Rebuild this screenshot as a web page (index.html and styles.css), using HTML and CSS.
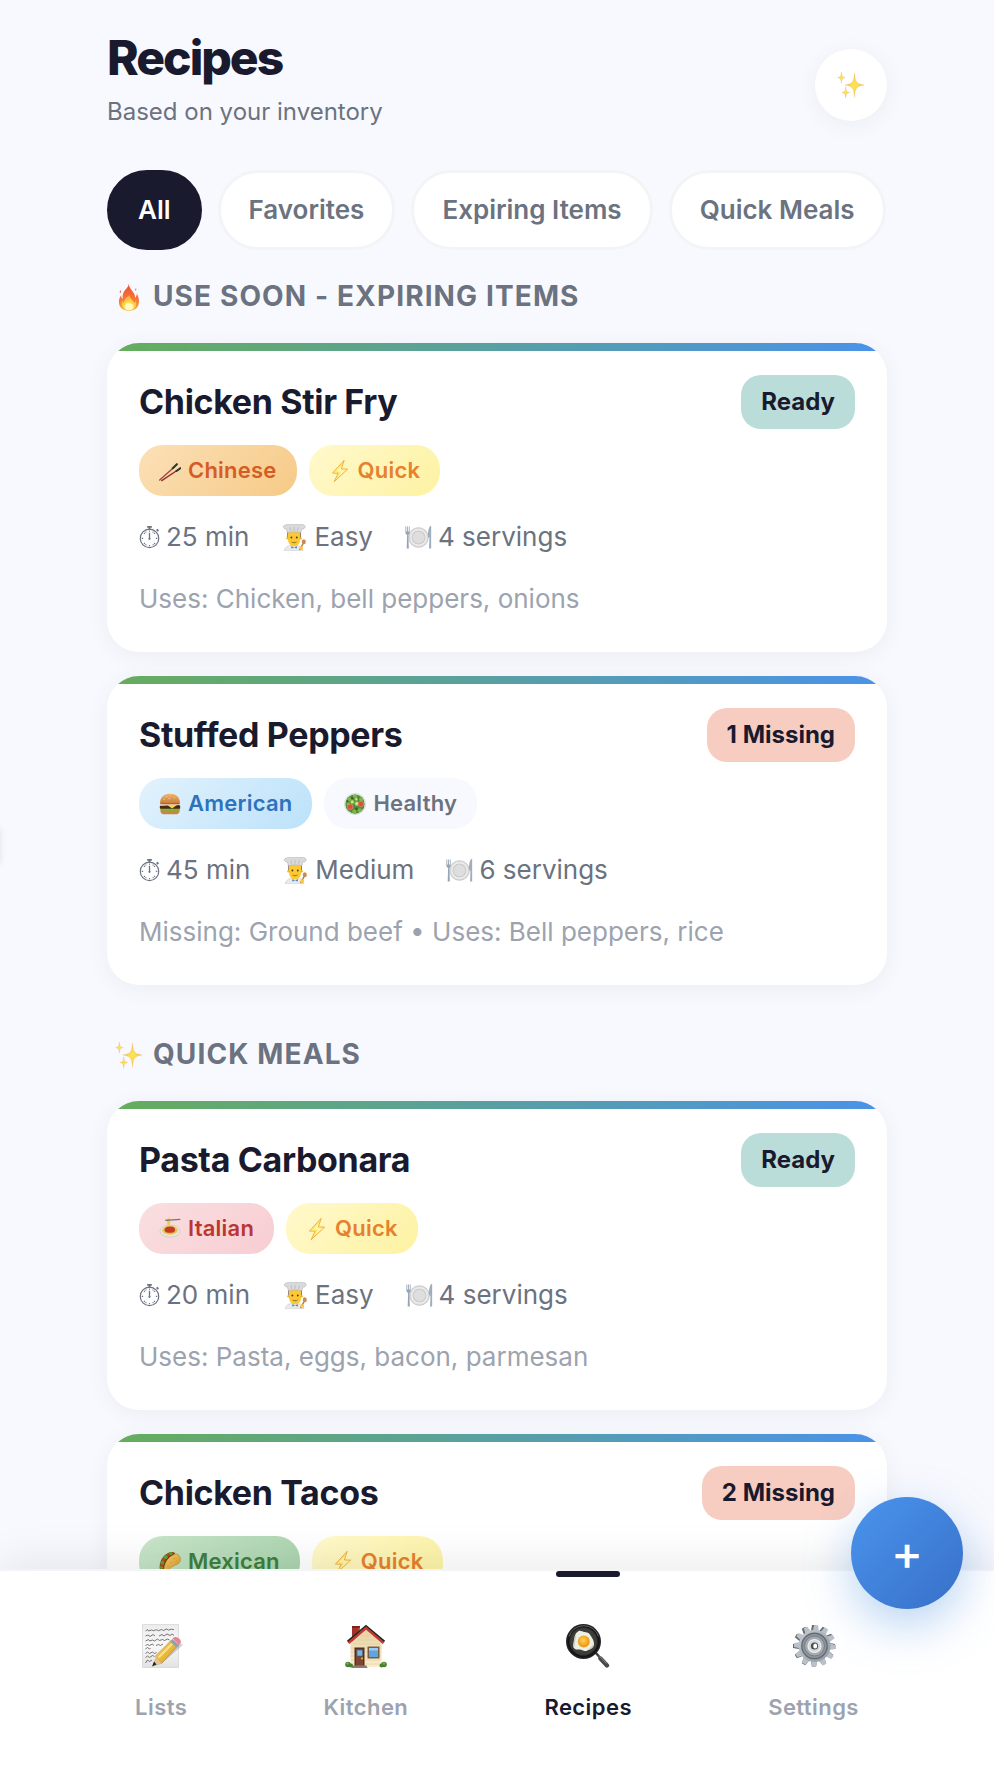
FILE: index.html
```html
<!DOCTYPE html>
<html lang="en">
<head>
<meta charset="utf-8">
<meta name="viewport" content="width=device-width, initial-scale=1">
<title>Recipes</title>
<link rel="stylesheet" href="styles.css">
</head>
<body>
<svg class="sprite" aria-hidden="true">
  <defs>
    <radialGradient id="g-star"><stop offset="0" stop-color="#fbe84a"/><stop offset=".45" stop-color="#fbd75a"/><stop offset="1" stop-color="#f0a848"/></radialGradient>
    <linearGradient id="g-fire" x1="0" y1="0" x2="0" y2="1"><stop offset="0" stop-color="#ee4a35"/><stop offset=".6" stop-color="#f67a38"/><stop offset="1" stop-color="#fbb03b"/></linearGradient>
    <radialGradient id="g-flame" cx=".5" cy=".85" r=".8"><stop offset="0" stop-color="#fffbb0"/><stop offset=".5" stop-color="#fdd94a"/><stop offset="1" stop-color="#f99b3c"/></radialGradient>
    <linearGradient id="g-bun" x1="0" y1="0" x2="0" y2="1"><stop offset="0" stop-color="#f0b26a"/><stop offset="1" stop-color="#c97f3a"/></linearGradient>
    <linearGradient id="g-paper" x1="0" y1="0" x2="0" y2="1"><stop offset="0" stop-color="#ececec"/><stop offset=".5" stop-color="#f8f8f8"/><stop offset="1" stop-color="#e2e2e2"/></linearGradient>
    <linearGradient id="g-pencil" x1="0" y1="0" x2="1" y2="1"><stop offset="0" stop-color="#fbdc62"/><stop offset="1" stop-color="#d9971c"/></linearGradient>
    <linearGradient id="g-wall" x1="0" y1="0" x2="0" y2="1"><stop offset="0" stop-color="#e6d3a4"/><stop offset="1" stop-color="#faedcc"/></linearGradient>
    <linearGradient id="g-gear" x1="0" y1="0" x2="1" y2="1"><stop offset="0" stop-color="#c6cdd4"/><stop offset="1" stop-color="#8f979f"/></linearGradient>
    <radialGradient id="g-pan"><stop offset="0" stop-color="#4a4a4a"/><stop offset=".75" stop-color="#3a3a3a"/><stop offset=".85" stop-color="#111"/><stop offset="1" stop-color="#2b2b2b"/></radialGradient>
    <radialGradient id="g-yolk" cx=".45" cy=".4"><stop offset="0" stop-color="#ffd34d"/><stop offset="1" stop-color="#ee9a1f"/></radialGradient>
    <radialGradient id="g-plate"><stop offset="0" stop-color="#dcdcdc"/><stop offset=".6" stop-color="#e4e4e4"/><stop offset=".66" stop-color="#c4c4c4"/><stop offset=".74" stop-color="#f0f0f0"/><stop offset="1" stop-color="#d4d4d4"/></radialGradient>
    <linearGradient id="g-taco" x1="0" y1="0" x2="1" y2="1"><stop offset="0" stop-color="#f7d468"/><stop offset="1" stop-color="#d69628"/></linearGradient>
  </defs>

  <symbol id="sparkles" viewBox="0 0 32 32">
    <g fill="url(#g-star)" stroke="#f3b765" stroke-width=".3">
      <path d="M20 2c.8 10 2 12.800 11 14-9 1.200-10.200 4-11 14-.8-10-2-12.800-11-14C18 14.800 19.200 12 20 2z"/>
      <path d="M5 1c.5 4.500 1.200 6 4.500 6.500C6.200 8 5.500 9.500 5 14 4.500 9.500 3.800 8 .5 7.500 3.800 7 4.500 5.500 5 1z"/>
      <path d="M10 18c.5 4.500 1.200 6 4.500 6.500-3.300.5-4 2-4.500 6.500-.5-4.500-1.200-6-4.500-6.500 3.300-.5 4-2 4.500-6.500z"/>
    </g>
  </symbol>

  <symbol id="fire" viewBox="2 0 24 32">
    <path fill="url(#g-fire)" d="M14 .5c-.8 5 4.500 8 6.300 12.500.6 1.500.7 2.500.5 4 1.500-1 2.200-3.200 2.100-5 2.100 4 3.100 7.500 2.300 11.500C24.300 29 19.500 31.800 14 31.800S3.300 29 2.600 23.500c-.8-4 .6-7 2.400-9.600 0 2 .6 3.300 1.700 4.300C6.300 13 7.800 10 10 7.500 11.600 5.600 13.400 4 14 .5z"/>
    <path fill="url(#g-flame)" d="M14.500 13c0 4 4.200 6 5.500 10 .9-1 1.200-2 1.200-3.200 1.500 3.700 1.300 6.500-.7 8.700-3.400 3.500-9.600 3.500-13 0-2.200-2.300-2.400-5.600-1-9 .3 1.400.8 2.500 1.800 3.300C8.300 19 9.700 17.500 11.500 16c1.500-1.200 2.500-1.500 3-3z"/>
    <ellipse cx="14" cy="27" rx="4.500" ry="4" fill="#fffcc0"/>
    <path fill="#f0583a" d="M4.500 8c-1 1.500-1.500 2.500-.8 3.800C4.800 11 5.100 9.700 4.500 8zM21 8c0-.8.300-1.500 1-2 .6 1 .5 1.900-.2 2.800z"/>
  </symbol>

  <symbol id="chopsticks" viewBox="0 0 32 32">
    <g stroke-linecap="round"><path stroke="#a8433b" stroke-width="2" d="M1 29 26 7"/><path stroke="#8d3230" stroke-width="2" d="M4 30 31 12"/><path stroke="#2c3a35" stroke-width="3" d="m20 12 6-6M25.500 16l5.500-4"/></g>
  </symbol>

  <symbol id="bolt" viewBox="0 0 32 32">
    <path fill="#fff6a8" stroke="#efa52f" stroke-width="1.300" stroke-linejoin="round" d="M22 .5 5 19l8.300.2L7.500 31.500 27 13.300l-9-.3z"/>
    <path fill="none" stroke="#f8de4c" stroke-width="1.200" d="M19.500 5.500 8 17.600l7.800.2-4.600 9"/>
  </symbol>

  <symbol id="stopwatch" viewBox="0 0 22 26">
    <g fill="none" stroke="currentColor"><circle cx="11" cy="14.500" r="10" stroke-width="1.300"/><path stroke-width="2" d="M8.500 2h5M11 2v3M18.800 4.700l1.800 1.800"/><path stroke-width="1.400" d="M11 8.500v6.500"/><path stroke-width="1.200" d="M11 6v1.300M11 21.700v1.400M2.600 14.500h1.500M17.900 14.500h1.500M5 8.500l1 1M17 20.500l-1-1M5 20.500l1-1M17 8.500l-1 1M6.800 7.200l.6 1M15.200 7.200l-.6 1M6.800 21.800l.6-1M15.200 21.800l-.6-1"/></g>
    <circle cx="11" cy="15" r="1.200" fill="currentColor"/>
  </symbol>

  <symbol id="chef" viewBox="0 0 32 32">
    <path fill="#e9eaec" stroke="#c3c6ca" stroke-width=".6" d="M4 32c0-4 3-6 7-6.500h8c4 .5 7 2.500 7 6.500z"/>
    <path fill="#6d5136" d="M7.500 8h16v8h-16z"/>
    <path fill="#fcc935" d="M8.300 9.500h14.400V18c0 5-3 8.500-7.200 8.500S8.300 23 8.300 18z"/>
    <circle cx="7.800" cy="17" r="1.500" fill="#f0b429"/><circle cx="23.200" cy="17" r="1.500" fill="#f0b429"/>
    <path fill="#d9dadc" stroke="#a9a9a9" stroke-width=".6" d="M7.500 10.500 6.500 6C2 6 1.500 1.500 5.500 1.200 8-.2 11.500.200 13.500.800c3-1 6-1 8 0 3.500-1 7.500.2 7 2.700C28.300 5.200 27 6 24.500 6l-1 4.500c-5-1.500-11-1.500-16 0z"/>
    <path fill="none" stroke="#aaa" stroke-width=".7" d="m10.500 4 1 4M15.500 3.500V8M20.500 4l-1 4"/>
    <circle cx="12.300" cy="16" r="1.100" fill="#553715"/><circle cx="18.700" cy="16" r="1.100" fill="#553715"/>
    <path fill="none" stroke="#8a5b19" stroke-linecap="round" d="M13 21.500c1.500 1 3.500 1 5 0"/>
    <path fill="#4f86c9" d="m12.500 26 3 2 3-2 .5 3-3.500-.8-3.500.8z"/>
    <ellipse cx="27" cy="21" rx="2.400" ry="3" fill="#c78a54"/><path stroke="#b87943" stroke-width="1.700" d="m26 23.500-4 7.500"/><circle cx="24" cy="28.500" r="2.200" fill="#fcc935"/>
  </symbol>

  <symbol id="plate" viewBox="0 0 32 32">
    <circle cx="16" cy="16" r="11.700" fill="url(#g-plate)" stroke="#bdbdbd" stroke-width=".8"/>
    <circle cx="16" cy="16" r="7.300" fill="#dedede" stroke="#c2c2c2" stroke-width=".6"/>
    <path fill="#94a4b5" d="M.5 3h1v6h1V3h1v6h1V3h1v7.500c0 1.500-.7 2-1.500 2.500l.5 16H2l.5-16C1.500 12.500.500 12 .5 10.500z"/>
    <path fill="#9eaebd" d="M30.500 2c-3 2-3.500 8-3 14h1.500l-.5 13h2.500V2z"/>
  </symbol>

  <symbol id="burger" viewBox="0 0 32 32">
    <path fill="#c98542" d="M2 24h28v2c0 3.500-3 5-6 5H8c-3 0-6-1.500-6-5z"/>
    <path fill="#6fbf30" d="M1 22c4-3 7 2 10-1 4 3 7-1 10 1 4-2 7-1 10 0 0 3-3 4-6 3-4 2-8-1-11 1-4-1-12 1-13-4z"/>
    <rect x="1" y="17.500" width="30" height="5.500" rx="2.700" fill="#4b2818"/>
    <path fill="#ffd33d" d="M2 17h28l-5 1-6 4.500-6-4.500-11 .8z"/>
    <path fill="#dc3b2f" d="M2 14h28v2.500H2z"/>
    <path fill="url(#g-bun)" d="M1.500 14C2 5 8 1 16 1s14 4 14.500 13c0 1-1 1-2 1h-25c-1 0-2 0-2-1z"/>
    <path stroke="#f7d6a0" stroke-linecap="round" d="m10 5 1.500.5M16 4h1.500M22 6l1 .8M7 9l1 .5M14 8h1.300"/>
  </symbol>

  <symbol id="salad" viewBox="0 0 32 32">
    <circle cx="16" cy="16" r="15.500" fill="#e0e9df" stroke="#c5cec5" stroke-width=".6"/><circle cx="16" cy="16" r="14" fill="#548d37"/>
    <g fill="#83b54f"><circle cx="8" cy="9" r="3"/><circle cx="16" cy="5" r="3"/><circle cx="25" cy="9" r="3"/><circle cx="6" cy="16" r="2.500"/><circle cx="15" cy="27" r="3"/><circle cx="23" cy="25" r="3"/></g>
    <g fill="#335f27"><circle cx="12" cy="7.500" r="1.700"/><circle cx="20" cy="9" r="1.600"/><circle cx="18" cy="23" r="1.800"/><circle cx="5" cy="12" r="1.300"/></g>
    <g fill="#cbe58a" stroke="#6ca53a"><circle cx="12" cy="13" r="2.800"/><circle cx="18.500" cy="15.500" r="3"/><circle cx="18" cy="9" r="2.300"/></g>
    <g fill="#d9503c" stroke="#eb9a83" stroke-width=".8"><circle cx="9" cy="20" r="4"/><circle cx="24.500" cy="16" r="4"/></g>
  </symbol>

  <symbol id="pasta" viewBox="0 0 32 32">
    <ellipse cx="16" cy="19" rx="14.500" ry="8.800" fill="#e9e9e4" stroke="#b9b9ae" stroke-width=".7"/>
    <ellipse cx="16" cy="17.800" rx="11.500" ry="6.800" fill="#eccb67"/>
    <g fill="none" stroke="#c49b35" stroke-width=".7"><path d="M6 17c5 6 15 7 20 0M8 14c2 3 13 5 16 0M9 21c5-4 10-2 14 0"/></g>
    <path fill="#c33b22" d="M8 17c0-3 4-5 8.500-4.500 4.500-.5 7 2 7 4.500 0 3.500-4 4.500-7.500 4.500S8 20.500 8 17z"/>
    <path fill="#eac95e" d="M11 2c2-2 5-2 6 0l-1.500 9h-3z"/><path stroke="#77766d" stroke-width="1.800" d="M9 3.500 31 2"/>
  </symbol>

  <symbol id="taco" viewBox="0 0 32 32">
    <path fill="#8a5a20" d="M1 25C0 13 8 3 18 1.500c3-.4 5 .5 5.500 2L8 30c-3 1-6-1-7-5z"/>
    <g fill="#5fa531"><circle cx="5" cy="17" r="2.800"/><circle cx="10" cy="9" r="3"/><circle cx="17" cy="4" r="2.700"/><circle cx="3.500" cy="24" r="2.200"/></g>
    <g fill="#cd3c28"><circle cx="7" cy="13" r="2"/><circle cx="14" cy="6.500" r="2"/><circle cx="4.500" cy="21" r="1.800"/></g>
    <path fill="#4b2c18" d="M7 29C5 18 12 7 22 4l-3 10z"/>
    <path fill="url(#g-taco)" stroke="#b9771f" stroke-width=".7" d="M7 29.500C7 17 14 7 24 4.500c6-.5 8.500 6.500 6.500 11-1.500 3-4 4-8 5.500-5 2-8 6-11.500 8.500-1.700 1-3.500 1-4 0z"/>
    <g fill="#c98d2a"><circle cx="22" cy="11" r=".8"/><circle cx="17" cy="17" r=".8"/><circle cx="25" cy="15" r=".8"/><circle cx="13" cy="22" r=".8"/></g>
  </symbol>

  <symbol id="memo" viewBox="0 0 44 44">
    <path fill="url(#g-paper)" stroke="#d3d3d3" stroke-width=".7" d="M3.500.5h36v43h-36z"/>
    <g fill="none" stroke="#555" stroke-width=".8"><path d="M6.500 7l2-1.500 1 1.500 3-1 2 .7 3-1 2 1 3-1.200 2 1 3-1.500 2 1 3-.8 2.500.5M6.500 12l2.500-1 2 1.500 3-2 2 1.500M20 12l3-1.500 2 1.500 3-2 3 1.500 2-1.500 2 1.500"/><path d="M6.500 17l3-1.500 1 1.500 3-1 2 1 3-2 2 1.500 3-1 2 1 3-1.500 2 1M6.500 21.500l2-1 2 1 3-1.500 1 1.500M17 21.500l2.500-1 2 1 2.500-1.500"/><path d="M6.500 25l2-1.500 2 1.500 1-1M6.500 29.500l2-1.500 2 1.500 3-1.500 2 1.500 2-1M6.500 33.500l2-1.500 2 1.500 3-2 2 1M6.500 39l2-3 2 1.500 2.500-1.500"/></g>
    <path fill="#000" opacity=".18" d="m15 42 26-23 3 2-22 19z"/>
    <path fill="url(#g-pencil)" stroke="#a9781e" stroke-width=".5" d="M16.500 32 32 16.500l6 6L22.500 39.500z"/>
    <path stroke="#fae38a" stroke-width="1.800" d="m19.500 33.500 14.500-14.500"/>
    <path fill="#8fa2b2" d="m31 17.500 2.500-2.500 6.500 6-2.500 2.700z"/>
    <path fill="#ea8490" d="M33.500 14.500c1.500-2 3.500-2 5.500-.8 2 1.200 3.300 3 2.800 5L40 21z"/>
    <path fill="#e6c48c" d="m16.500 32 6 7.500-8.500 2z"/><path fill="#222" d="m15 37.500 2.500 3-4.500 2z"/>
  </symbol>

  <symbol id="house" viewBox="0 0 44 44">
    <path fill="#a33228" d="M8 2h8v12l-8 5z"/><path fill="#7d1f1a" d="M8 2h8v1.800H8z"/><path fill="#cf5a49" d="M14.500 3.800H16v10l-1.500 1z"/>
    <path fill="url(#g-wall)" d="M6.500 19 22 4.500 37.500 19v24h-31z"/>
    <path stroke="#dbc795" stroke-width=".5" d="M17 12h10M13 16h18M9 20h27M6.500 24h31M6.500 28h31M6.500 32h31M6.500 36h31M6.500 40h31"/>
    <path fill="none" stroke="#232a2b" stroke-width="2" d="M3.500 17.500 22 2l18.500 15.500"/>
    <path fill="none" stroke="#c5372f" stroke-width="2.400" d="M4.500 19.200 22 4.200l17.500 15"/>
    <path fill="#5b2d1c" d="M10.500 23.500h10v19h-10z"/><path fill="#7c4630" d="M12 25h7v17h-7z"/><path fill="#75b7e8" stroke="#3b5f83" stroke-width=".6" d="M13 26h5.500v6H13z"/><circle cx="18" cy="34.500" r="1" fill="#f0c33c"/>
    <path fill="#7b5a45" d="M23.500 22.500h12v12h-12z"/><path fill="#5fa5e0" d="M25 24h9v9h-9z"/><path fill="#9bcdf2" d="M25 24h9v2.500h-9z"/>
    <path fill="#8a7d74" d="M8.500 41.500h14l1 2.500h-16z"/>
    <g fill="#477f2e"><circle cx="4" cy="40.500" r="2.800"/><circle cx="7" cy="41.500" r="2"/><circle cx="40" cy="40.500" r="2.800"/><circle cx="37.500" cy="41.500" r="2"/></g><g fill="#79aa4b"><circle cx="3.500" cy="39.500" r="1.300"/><circle cx="40" cy="39.500" r="1.300"/></g>
  </symbol>

  <symbol id="pan" viewBox="0 0 44 44">
    <path stroke="#3b3b3b" stroke-width="2.500" d="m29 28 5 5.500"/><path stroke="#484848" stroke-width="4.300" stroke-linecap="round" d="m34.500 34.500 6.500 7"/><path stroke="#8b8b8b" d="m33 31.500 7.500 8"/>
    <circle cx="17.500" cy="17.500" r="17.500" fill="url(#g-pan)"/><path fill="none" stroke="#777" stroke-width=".8" d="M3 12.500A15.500 15.500 0 0 1 32.500 12.500"/>
    <path fill="#edf0e1" d="M11.500 8c2-2.500 4.500-.5 7 0 4 .5 5 1.500 6.500 4.200 1.500 2.500 3 4.500 3 7.800 0 4.500-4 4.500-6.200 6.200-3 1.800-4 .2-6.800-.5-3-.7-4 .5-6.300-1-2.700-1.800-1-4.700-.5-7.700C8.500 14 8.500 10 11.500 8z"/>
    <path fill="none" stroke="#c9cdbd" stroke-width="1.300" d="M9.500 12c-.5 4-2.500 7.500-1 10.500M23 25.500c2.500-1 3.500-2.500 4-4.500"/>
    <circle cx="17.800" cy="17.500" r="6" fill="url(#g-yolk)"/>
  </symbol>

  <symbol id="gear" viewBox="0 0 44 44">
    <g fill="#67696c"><path id="tooth" d="M18.800 8 20 1h4l1.200 7z"/><use href="#tooth" transform="rotate(30 22 22)"/><use href="#tooth" transform="rotate(60 22 22)"/><use href="#tooth" transform="rotate(90 22 22)"/><use href="#tooth" transform="rotate(120 22 22)"/><use href="#tooth" transform="rotate(150 22 22)"/><use href="#tooth" transform="rotate(180 22 22)"/><use href="#tooth" transform="rotate(210 22 22)"/><use href="#tooth" transform="rotate(240 22 22)"/><use href="#tooth" transform="rotate(270 22 22)"/><use href="#tooth" transform="rotate(300 22 22)"/><use href="#tooth" transform="rotate(330 22 22)"/></g>
    <g fill="#b9c2cb" transform="translate(1 0) rotate(3 22 22)"><path id="tooth-front" d="M18.800 8 20 1h4l1.200 7z"/><use href="#tooth-front" transform="rotate(30 22 22)"/><use href="#tooth-front" transform="rotate(60 22 22)"/><use href="#tooth-front" transform="rotate(90 22 22)"/><use href="#tooth-front" transform="rotate(120 22 22)"/><use href="#tooth-front" transform="rotate(150 22 22)"/><use href="#tooth-front" transform="rotate(180 22 22)"/><use href="#tooth-front" transform="rotate(210 22 22)"/><use href="#tooth-front" transform="rotate(240 22 22)"/><use href="#tooth-front" transform="rotate(270 22 22)"/><use href="#tooth-front" transform="rotate(300 22 22)"/><use href="#tooth-front" transform="rotate(330 22 22)"/></g>
    <circle cx="22.500" cy="22" r="16" fill="url(#g-gear)"/>
    <circle cx="22.500" cy="22" r="12.700" fill="#8f969d" stroke="#666b70" stroke-width="1.400"/>
    <circle cx="22.500" cy="22" r="10" fill="#a3abb3" stroke="#777d83"/>
    <circle cx="22.500" cy="22" r="6.500" fill="#d3d8dc" stroke="#eef1f3" stroke-width="1.200"/>
    <circle cx="22.500" cy="22" r="3.600" fill="#4d4a48"/><ellipse cx="23.200" cy="22" rx="2" ry="2.600" fill="#fff"/>
  </symbol>
</svg>

<div class="app">
  <main class="screen">
    <div class="content">
      <header class="page-header">
        <div class="heading">
          <h1 class="page-title">Recipes</h1>
          <p class="page-subtitle">Based on your inventory</p>
        </div>
        <button class="round-button" type="button" aria-label="Suggest recipes"><svg class="round-icon"><use href="#sparkles"/></svg></button>
      </header>

      <div class="filters">
        <button class="filter filter-active" type="button">All</button>
        <button class="filter" type="button">Favorites</button>
        <button class="filter" type="button">Expiring Items</button>
        <button class="filter" type="button">Quick Meals</button>
      </div>

      <section class="section">
        <h2 class="section-title"><svg class="section-icon"><use href="#fire"/></svg>Use Soon - Expiring Items</h2>
        <article class="card">
          <div class="card-header"><h3 class="card-title">Chicken Stir Fry</h3><span class="badge badge-ready">Ready</span></div>
          <div class="tags">
            <span class="tag tag-chinese"><svg class="tag-icon"><use href="#chopsticks"/></svg>Chinese</span>
            <span class="tag tag-quick"><svg class="tag-icon"><use href="#bolt"/></svg>Quick</span>
          </div>
          <div class="meta">
            <span class="meta-item"><svg class="meta-icon meta-icon-time"><use href="#stopwatch"/></svg>25 min</span>
            <span class="meta-item"><svg class="meta-icon"><use href="#chef"/></svg>Easy</span>
            <span class="meta-item"><svg class="meta-icon"><use href="#plate"/></svg>4 servings</span>
          </div>
          <p class="ingredients">Uses: Chicken, bell peppers, onions</p>
        </article>
        <article class="card">
          <div class="card-header"><h3 class="card-title">Stuffed Peppers</h3><span class="badge badge-missing">1 Missing</span></div>
          <div class="tags">
            <span class="tag tag-american"><svg class="tag-icon"><use href="#burger"/></svg>American</span>
            <span class="tag"><svg class="tag-icon"><use href="#salad"/></svg>Healthy</span>
          </div>
          <div class="meta">
            <span class="meta-item"><svg class="meta-icon meta-icon-time"><use href="#stopwatch"/></svg>45 min</span>
            <span class="meta-item"><svg class="meta-icon"><use href="#chef"/></svg>Medium</span>
            <span class="meta-item"><svg class="meta-icon"><use href="#plate"/></svg>6 servings</span>
          </div>
          <p class="ingredients">Missing: Ground beef • Uses: Bell peppers, rice</p>
        </article>
      </section>

      <section class="section">
        <h2 class="section-title"><svg class="section-icon"><use href="#sparkles"/></svg>Quick Meals</h2>
        <article class="card">
          <div class="card-header"><h3 class="card-title">Pasta Carbonara</h3><span class="badge badge-ready">Ready</span></div>
          <div class="tags">
            <span class="tag tag-italian"><svg class="tag-icon"><use href="#pasta"/></svg>Italian</span>
            <span class="tag tag-quick"><svg class="tag-icon"><use href="#bolt"/></svg>Quick</span>
          </div>
          <div class="meta">
            <span class="meta-item"><svg class="meta-icon meta-icon-time"><use href="#stopwatch"/></svg>20 min</span>
            <span class="meta-item"><svg class="meta-icon"><use href="#chef"/></svg>Easy</span>
            <span class="meta-item"><svg class="meta-icon"><use href="#plate"/></svg>4 servings</span>
          </div>
          <p class="ingredients">Uses: Pasta, eggs, bacon, parmesan</p>
        </article>
        <article class="card">
          <div class="card-header"><h3 class="card-title">Chicken Tacos</h3><span class="badge badge-missing">2 Missing</span></div>
          <div class="tags">
            <span class="tag tag-mexican"><svg class="tag-icon"><use href="#taco"/></svg>Mexican</span>
            <span class="tag tag-quick"><svg class="tag-icon"><use href="#bolt"/></svg>Quick</span>
          </div>
        </article>
      </section>
    </div>
  </main>

  <nav class="tab-bar">
    <div class="tabs">
      <a class="tab" href="#lists"><svg class="tab-icon"><use href="#memo"/></svg>Lists</a>
      <a class="tab" href="#kitchen"><svg class="tab-icon"><use href="#house"/></svg>Kitchen</a>
      <a class="tab tab-active" href="#recipes" aria-current="page"><svg class="tab-icon"><use href="#pan"/></svg>Recipes</a>
      <a class="tab" href="#settings"><svg class="tab-icon"><use href="#gear"/></svg>Settings</a>
    </div>
  </nav>
  <button class="fab" type="button" aria-label="Add recipe">+</button>
  <div class="edge-handle"></div>
</div>
</body>
</html>
```
FILE: styles.css
```css
* { box-sizing: border-box; }

body {
  margin: 0;
  background: #f8f9fe;
  color: #1a1a2e;
  font-family: Inter, "Liberation Sans", sans-serif;
}

h1, h2, h3, p { margin: 0; }
button { font-family: inherit; cursor: pointer; }

.sprite { position: absolute; width: 0; height: 0; }

.app {
  position: relative;
  display: flex;
  flex-direction: column;
  height: 100vh;
  overflow: hidden;
}

.screen {
  flex: 1;
  min-height: 0;
  overflow-y: auto;
  scrollbar-width: none;
}

.content {
  max-width: 828px;
  margin: 0 auto;
  padding: 29px 24px 0;
}

.page-header {
  display: flex;
  align-items: center;
  justify-content: space-between;
  margin-bottom: 29px;
}
.heading { padding-bottom: 10px; }
.page-title {
  margin-bottom: 6px;
  font-size: 48px;
  line-height: 58px;
  font-weight: 800;
  letter-spacing: -2px;
}
.page-subtitle { font-size: 24px; line-height: 38px; color: #6b7280; }

.round-button {
  display: flex;
  align-items: center;
  justify-content: center;
  width: 72px;
  height: 72px;
  padding: 0;
  border: 0;
  border-radius: 50%;
  background: #fff;
  box-shadow: 0 4px 24px rgba(26, 26, 46, .05);
}
.round-icon { width: 28px; height: 28px; }

.filters { display: flex; gap: 16px; margin-bottom: 24px; }
.filter {
  padding: 16px 28px;
  border: 3px solid #f3f4f6;
  border-radius: 40px;
  background: #fff;
  color: #6b7280;
  font-size: 26px;
  line-height: 42px;
  font-weight: 600;
  white-space: nowrap;
}
.filter-active { border-color: #1a1a2e; background: #1a1a2e; color: #fff; }

.section { display: flex; flex-direction: column; gap: 24px; margin-bottom: 47px; }
.section-title {
  display: flex;
  align-items: center;
  gap: 10px;
  padding-left: 8px;
  color: #6b7280;
  font-size: 28px;
  line-height: 45px;
  font-weight: 700;
  letter-spacing: 0.04em;
  text-transform: uppercase;
}
.section-icon { width: 28px; height: 28px; }

.card {
  position: relative;
  overflow: hidden;
  padding: 32px;
  border-radius: 32px;
  background: #fff;
  box-shadow: 0 4px 24px rgba(26, 26, 46, .05);
}
.card::before {
  content: "";
  position: absolute;
  top: 0;
  left: 0;
  right: 0;
  height: 8px;
  background: linear-gradient(90deg, #66ad5c, #4a92ea);
}

.card-header {
  display: flex;
  align-items: center;
  justify-content: space-between;
  margin-bottom: 16px;
}
.card-title { font-size: 34px; line-height: 54px; font-weight: 700; letter-spacing: -0.01em; }

.badge {
  padding: 12px 20px;
  border-radius: 20px;
  font-size: 24px;
  line-height: 30px;
  font-weight: 700;
}
.badge-ready { background: #bbddda; }
.badge-missing { background: #f8cdc1; }

.tags { display: flex; gap: 12px; margin-bottom: 20px; }
.tag {
  display: flex;
  align-items: center;
  gap: 7px;
  padding: 8px 20px;
  border-radius: 24px;
  background: #f8f9fe;
  color: #6b7280;
  font-size: 22px;
  line-height: 35px;
  font-weight: 600;
  letter-spacing: 0.01em;
}
.tag-icon { width: 22px; height: 22px; }
.tag-chinese { background: linear-gradient(135deg, #fbe0b7, #f6ca86); color: #d65c26; }
.tag-quick { background: linear-gradient(135deg, #fff9cc, #fdf2a2); color: #e6812e; }
.tag-american { background: linear-gradient(135deg, #e3f2fd, #bbe2fa); color: #2e72be; }
.tag-italian { background: linear-gradient(135deg, #fadfe0, #f7cdd2); color: #b93632; }
.tag-mexican { background: linear-gradient(135deg, #c9e6cb, #a8d2ab); color: #3d7f3d; }

.meta { display: flex; gap: 32px; margin-bottom: 20px; }
.meta-item {
  display: flex;
  align-items: center;
  gap: 6px;
  color: #6b7280;
  font-size: 26px;
  line-height: 42px;
}
.meta-icon { width: 27px; height: 27px; }
.meta-icon-time { width: 21px; height: 24px; }

.ingredients { color: #9ca3af; font-size: 26px; line-height: 42px; }

.tab-bar {
  position: relative;
  border-top: 2px solid #f3f4f6;
  background: #fff;
  box-shadow: 0 -8px 40px rgba(0, 0, 0, .08);
}
.tabs {
  display: flex;
  justify-content: space-around;
  max-width: 860px;
  margin: 0 auto;
}
.tab {
  position: relative;
  display: flex;
  flex-direction: column;
  align-items: center;
  gap: 22px;
  padding: 53px 0 51px;
  color: #9ca3af;
  font-size: 22px;
  line-height: 35px;
  font-weight: 600;
  letter-spacing: 0.02em;
  text-decoration: none;
}
.tab-icon { width: 44px; height: 44px; }
.tab-active { color: #1a1a2e; }
.tab-active::before {
  content: "";
  position: absolute;
  top: 0;
  left: 50%;
  width: 64px;
  height: 6px;
  margin-left: -32px;
  border-radius: 3px;
  background: #1a1a2e;
}

.fab {
  position: absolute;
  right: 31px;
  bottom: 167px;
  width: 112px;
  height: 112px;
  padding: 0;
  border: 0;
  border-radius: 50%;
  background: linear-gradient(135deg, #4a94ee, #3870c8);
  box-shadow: 0 16px 48px rgba(74, 144, 226, .4);
  color: #fff;
  font-size: 48px;
  line-height: 56px;
  font-weight: 500;
}

.edge-handle {
  position: absolute;
  top: 828px;
  left: -8px;
  width: 8px;
  height: 36px;
  box-shadow: 0 0 6px rgba(0, 0, 0, .1);
}
```
